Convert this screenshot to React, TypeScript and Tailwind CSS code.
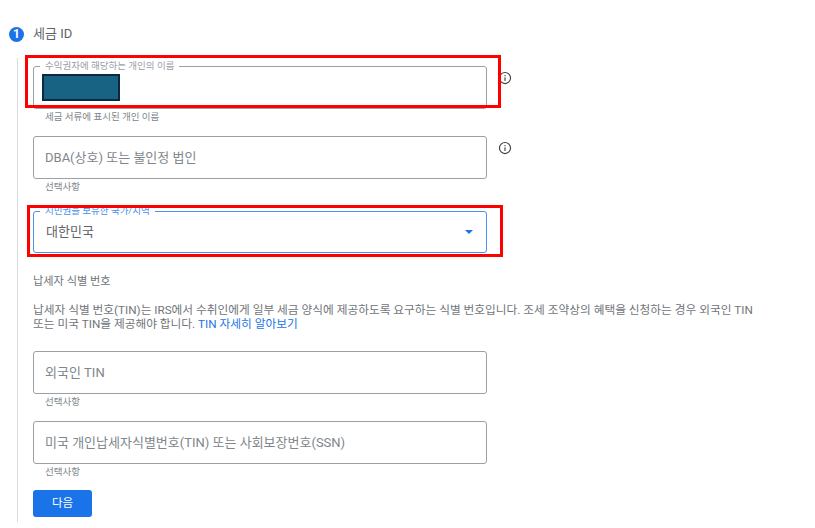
const font = "font-['Roboto','Noto_Sans_CJK_KR',sans-serif]";

function InfoIcon() {
  return (
    <svg width="14" height="14" viewBox="0 0 24 24" fill="none" className="text-[#3c4043]">
      <circle cx="12" cy="12" r="9.5" stroke="currentColor" strokeWidth="2" />
      <rect x="11" y="11" width="2" height="6" fill="currentColor" />
      <rect x="11" y="7" width="2" height="2" fill="currentColor" />
    </svg>
  );
}

function Field({ placeholder, helper, info }: { placeholder: string; helper: string; info?: boolean }) {
  return (
    <div className="flex flex-col">
      <div className="flex items-start">
        <div className="w-[454px] h-[43px] border border-[#9aa0a6] rounded-[3px] flex items-center pl-[11px] text-[13px] text-[#80868b]">
          {placeholder}
        </div>
        {info && (
          <div className="ml-[11px] mt-[5px]">
            <InfoIcon />
          </div>
        )}
      </div>
      <div className="h-[10px] mt-[3px] pl-[12px] text-[9.5px] leading-[10px] text-[#80868b]">{helper}</div>
    </div>
  );
}

export default function App() {
  return (
    <div className={`relative w-[815px] h-[528px] overflow-hidden bg-white ${font}`}>
      {/* 단계 제목 */}
      <div className="flex items-center h-[16px] mt-[26px] ml-[9px] gap-[9px]">
        <div className="w-[15px] h-[15px] rounded-full bg-[#1a73e8] text-white text-[12px] font-bold flex items-center justify-center">
          1
        </div>
        <span className="text-[13px] text-[#5f6368]">세금 ID</span>
      </div>

      <div className="ml-[17px] mt-[16px] h-[464px] border-l border-[#dadce0] pl-[15px] pt-[8px]">
        {/* 수익권자 이름 */}
        <div className="relative">
          <div className="flex items-start">
            <div className="relative w-[454px] h-[43px] border border-[#9aa0a6] rounded-[3px]">
              <span className="absolute left-[6px] -top-[6px] bg-white px-[5px] text-[9.5px] leading-[10px] text-[#9aa0a6]">
                수익권자에 해당하는 개인의 이름
              </span>
              <div className="absolute left-[8px] top-[7px] w-[78px] h-[27px] bg-[#186284] border-2 border-[#0b2a41]" />
            </div>
            <div className="ml-[11px] mt-[5px]">
              <InfoIcon />
            </div>
          </div>
          <div className="h-[10px] mt-[3px] pl-[12px] text-[9.5px] leading-[10px] text-[#80868b]">
            세금 서류에 표시된 개인 이름
          </div>
        </div>

        <div className="mt-[14px]">
          <Field placeholder="DBA(상호) 또는 불인정 법인" helper="선택사항" info />
        </div>

        {/* 시민권 국가 */}
        <div className="relative mt-[19px] w-[454px] h-[42px] border border-[#4a90ee] rounded-[3px] flex items-center justify-between pl-[12px] pr-[13px] text-[13px] text-[#5f6368]">
          <span className="absolute left-[6px] -top-[6px] bg-white px-[5px] text-[9.5px] leading-[10px] text-[#4a90ee]">
            시민권을 보유한 국가/지역
          </span>
          <span>대한민국</span>
          <div className="w-0 h-0 border-l-[4px] border-r-[4px] border-t-[4px] border-l-transparent border-r-transparent border-t-[#1a73e8]" />
        </div>

        <div className="mt-[21px] text-[11.2px] leading-[16px] text-[#70757a]">납세자 식별 번호</div>
        <p className="mt-[13px] w-[760px] text-[11.7px] leading-[14px] text-[#70757a]">
          납세자 식별 번호(TIN)는 IRS에서 수취인에게 일부 세금 양식에 제공하도록 요구하는 식별 번호입니다. 조세 조약상의 혜택을 신청하는 경우 외국인 TIN
          <br />
          또는 미국 TIN을 제공해야 합니다. <span className="text-[#1a73e8]">TIN 자세히 알아보기</span>
        </p>

        <div className="mt-[20px]">
          <Field placeholder="외국인 TIN" helper="선택사항" />
        </div>
        <div className="mt-[14px]">
          <Field placeholder="미국 개인납세자식별번호(TIN) 또는 사회보장번호(SSN)" helper="선택사항" />
        </div>

        <button className="mt-[13px] w-[59px] h-[27px] rounded-[3px] bg-[#1a73e8] text-white text-[11.5px] flex items-center justify-center">
          다음
        </button>
      </div>

      {/* 빨간 강조 표시 */}
      <div className="absolute left-[25px] top-[55px] w-[476px] h-[53px] border-[3px] border-[#ff0000] pointer-events-none" />
      <div className="absolute left-[27px] top-[205px] w-[476px] h-[52px] border-[3px] border-[#ff0000] pointer-events-none" />
    </div>
  );
}
